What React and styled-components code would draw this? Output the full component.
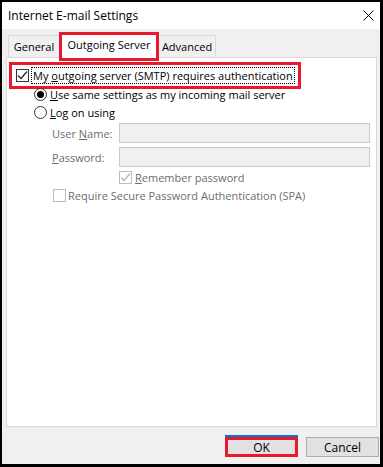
import React from "react";
import styled, { createGlobalStyle } from "styled-components";

const GlobalStyle = createGlobalStyle`
  html, body {
    margin: 0;
    padding: 0;
    background: #000;
  }
  * {
    box-sizing: border-box;
  }
`;

const CheckMark = ({ color }) => (
  <svg width="11" height="11" viewBox="0 0 11 11">
    <path d="M1 5.5 L4 8.5 L10 1.5" fill="none" stroke={color} strokeWidth="1.2" />
  </svg>
);

export default () => {
  return (
    <>
      <GlobalStyle />
      <Window>
        <TitleBar>
          <Title>Internet E-mail Settings</Title>
          <CloseIcon width="11" height="11" viewBox="0 0 11 11">
            <path d="M0.5 0.5 L10.5 10.5 M10.5 0.5 L0.5 10.5" stroke="#000" strokeWidth="1" />
          </CloseIcon>
        </TitleBar>
        <Body>
          <Tabs>
            <Tab width={52}>General</Tab>
            <Tab active width={100}>
              Outgoing Server
            </Tab>
            <Tab width={58}>Advanced</Tab>
          </Tabs>
          <Panel>
            <Highlight>
              <CheckBox>
                <CheckMark color="#222" />
              </CheckBox>
              <FocusLabel>
                My <u>o</u>utgoing server (SMTP) requires authentication
              </FocusLabel>
            </Highlight>
            <Options>
              <RadioRow>
                <Radio checked />
                <span>
                  <u>U</u>se same settings as my incoming mail server
                </span>
              </RadioRow>
              <RadioRow>
                <Radio />
                <span>
                  <u>L</u>og on using
                </span>
              </RadioRow>
            </Options>
            <Fields>
              <FieldRow>
                <FieldLabel>
                  User <u>N</u>ame:
                </FieldLabel>
                <Input disabled />
              </FieldRow>
              <FieldRow>
                <FieldLabel>
                  <u>P</u>assword:
                </FieldLabel>
                <Input disabled />
              </FieldRow>
            </Fields>
            <RememberRow>
              <CheckBox disabled>
                <CheckMark color="#b5b5b5" />
              </CheckBox>
              <DisabledText>
                <u>R</u>emember password
              </DisabledText>
            </RememberRow>
            <SpaRow>
              <CheckBox disabled />
              <DisabledText>Require Secure Password Authentication (SPA)</DisabledText>
            </SpaRow>
          </Panel>
          <Footer>
            <Button primary>OK</Button>
            <Button>Cancel</Button>
          </Footer>
        </Body>
      </Window>
    </>
  );
};

const Window = styled.div`
  width: 383px;
  height: 467px;
  border-style: solid;
  border-color: #000;
  border-width: 2px 3px 3px 2px;
  display: flex;
  flex-direction: column;
  font-family: "Open Sans", "Noto Sans", sans-serif;
  font-size: 11px;
  color: #000;
  background: #f0f0f0;
`;

const TitleBar = styled.div`
  height: 27px;
  background: #fff;
  display: flex;
  align-items: center;
  justify-content: space-between;
  padding: 0 6px 0 6px;
`;

const Title = styled.div`
  font-size: 12px;
  margin-top: -1px;
`;

const CloseIcon = styled.svg`
  display: block;
  margin-top: -1px;
`;

const Body = styled.div`
  flex: 1;
  display: flex;
  flex-direction: column;
  padding: 3px 0 7px 4px;
`;

const Tabs = styled.div`
  display: flex;
  align-items: flex-end;
  padding-left: 2px;
  height: 29px;
  margin-bottom: -4px;
  position: relative;
  z-index: 1;
`;

const Tab = styled.div`
  width: ${(p) => p.width}px;
  display: flex;
  align-items: center;
  justify-content: center;
  flex-shrink: 0;
  background: ${(p) => (p.active ? "#fff" : "#f0f0f0")};
  border: ${(p) => (p.active ? "3px solid #e8192c" : "1px solid #d9d9d9")};
  border-bottom: ${(p) => (p.active ? "3px solid #e8192c" : "none")};
  height: ${(p) => (p.active ? "29px" : "22px")};
  margin-bottom: ${(p) => (p.active ? "0" : "4px")};
  padding-bottom: ${(p) => (p.active ? "5px" : "0")};
  font-size: 11px;
  margin-left: ${(p) => (p.active ? "-1px" : "0")};
  margin-right: ${(p) => (p.active ? "-1px" : "0")};
  position: relative;
  z-index: ${(p) => (p.active ? 2 : 1)};
`;

const Panel = styled.div`
  height: 370px;
  margin-right: 3px;
  background: #fff;
  border: 1px solid #d9d9d9;
  padding: 4px 0 0 2px;
  display: flex;
  flex-direction: column;
`;

const Highlight = styled.div`
  width: 292px;
  height: 27px;
  border: 3px solid #e8192c;
  display: flex;
  align-items: center;
  padding-left: 4px;
  gap: 3px;
`;

const CheckBox = styled.div`
  width: 13px;
  height: 13px;
  border: 1px solid ${(p) => (p.disabled ? "#bcbcbc" : "#333")};
  background: #fff;
  display: flex;
  align-items: center;
  justify-content: center;
  flex-shrink: 0;
`;

const FocusLabel = styled.span`
  outline: 1px dotted #000;
  padding: 0 1px;
  line-height: 15px;
`;

const Options = styled.div`
  display: flex;
  flex-direction: column;
  padding-left: 25px;
  margin-top: -4px;
`;

const RadioRow = styled.div`
  display: flex;
  align-items: center;
  gap: 3px;
  height: 18px;
`;

const Radio = styled.span`
  width: 13px;
  height: 13px;
  border-radius: 50%;
  border: 1px solid #333;
  background: #fff;
  display: flex;
  align-items: center;
  justify-content: center;
  &::after {
    content: "";
    width: 7px;
    height: 7px;
    border-radius: 50%;
    background: ${(p) => (p.checked ? "#000" : "transparent")};
  }
`;

const Fields = styled.div`
  display: flex;
  flex-direction: column;
  gap: 4px;
  padding-left: 43px;
  margin-top: 2px;
`;

const FieldRow = styled.div`
  display: flex;
  align-items: center;
  height: 20px;
`;

const FieldLabel = styled.span`
  width: 67px;
  color: #6d6d6d;
`;

const Input = styled.input`
  width: 251px;
  height: 20px;
  border: 1px solid #c4ccd8;
  background: #f0f0f0;
  margin: 0;
`;

const RememberRow = styled.div`
  display: flex;
  align-items: center;
  gap: 3px;
  height: 18px;
  padding-left: 110px;
  margin-top: 1px;
`;

const SpaRow = styled.div`
  display: flex;
  align-items: center;
  gap: 2px;
  height: 18px;
  padding-left: 44px;
`;

const DisabledText = styled.span`
  color: #6d6d6d;
`;

const Footer = styled.div`
  display: flex;
  justify-content: flex-end;
  gap: 8px;
  margin-top: auto;
  padding-right: 1px;
`;

const Button = styled.div`
  width: 73px;
  height: 20px;
  display: flex;
  align-items: center;
  justify-content: center;
  background: #e1e1e1;
  border: ${(p) => (p.primary ? "3px solid #e8192c" : "1px solid #adadad")};
  box-shadow: ${(p) => (p.primary ? "0 -2px 0 #0078d7" : "none")};
  font-size: 12px;
`;
